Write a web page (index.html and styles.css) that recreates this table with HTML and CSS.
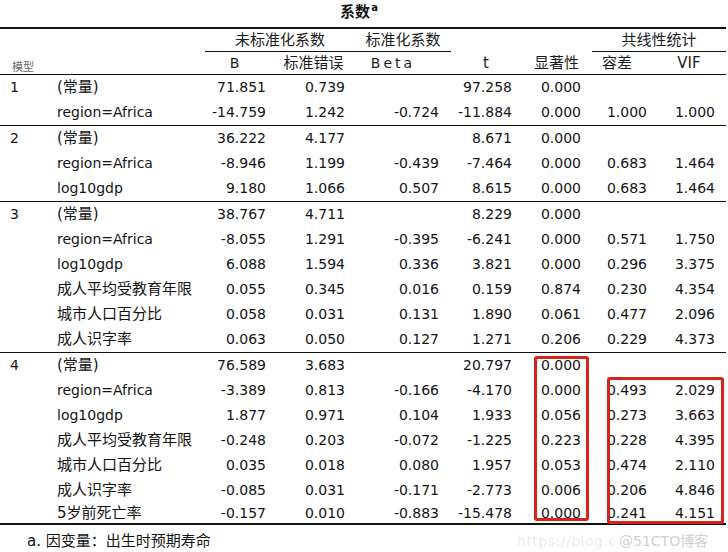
FILE: index.html
```html
<!DOCTYPE html>
<html lang="zh">
<head>
<meta charset="utf-8">
<title>系数</title>
<link rel="stylesheet" href="styles.css">
</head>
<body>
<div class="page">
  <div class="title">系数<sup>a</sup></div>
  <table class="coef">
    <colgroup>
      <col class="c-model"><col class="c-var"><col class="c-b"><col class="c-se"><col class="c-beta"><col class="c-t"><col class="c-sig"><col class="c-tol"><col class="c-vif">
    </colgroup>
    <thead>
      <tr class="h1">
        <th colspan="2"></th>
        <th colspan="2" class="span">未标准化系数</th>
        <th class="span">标准化系数</th>
        <th colspan="2"></th>
        <th colspan="2" class="span">共线性统计</th>
      </tr>
      <tr class="h2">
        <th class="model-h">模型</th>
        <th></th>
        <th class="hb">B</th>
        <th>标准错误</th>
        <th class="beta">Beta</th>
        <th>t</th>
        <th>显著性</th>
        <th class="htol">容差</th>
        <th>VIF</th>
      </tr>
    </thead>
    <tbody>
      <tr class="first"><td>1</td><td class="zh">(常量)</td><td>71.851</td><td>0.739</td><td></td><td>97.258</td><td>0.000</td><td></td><td></td></tr>
      <tr><td></td><td>region=Africa</td><td>-14.759</td><td>1.242</td><td>-0.724</td><td>-11.884</td><td>0.000</td><td>1.000</td><td>1.000</td></tr>

      <tr class="first"><td>2</td><td class="zh">(常量)</td><td>36.222</td><td>4.177</td><td></td><td>8.671</td><td>0.000</td><td></td><td></td></tr>
      <tr><td></td><td>region=Africa</td><td>-8.946</td><td>1.199</td><td>-0.439</td><td>-7.464</td><td>0.000</td><td>0.683</td><td>1.464</td></tr>
      <tr><td></td><td>log10gdp</td><td>9.180</td><td>1.066</td><td>0.507</td><td>8.615</td><td>0.000</td><td>0.683</td><td>1.464</td></tr>

      <tr class="first"><td>3</td><td class="zh">(常量)</td><td>38.767</td><td>4.711</td><td></td><td>8.229</td><td>0.000</td><td></td><td></td></tr>
      <tr><td></td><td>region=Africa</td><td>-8.055</td><td>1.291</td><td>-0.395</td><td>-6.241</td><td>0.000</td><td>0.571</td><td>1.750</td></tr>
      <tr><td></td><td>log10gdp</td><td>6.088</td><td>1.594</td><td>0.336</td><td>3.821</td><td>0.000</td><td>0.296</td><td>3.375</td></tr>
      <tr><td></td><td class="zh">成人平均受教育年限</td><td>0.055</td><td>0.345</td><td>0.016</td><td>0.159</td><td>0.874</td><td>0.230</td><td>4.354</td></tr>
      <tr><td></td><td class="zh">城市人口百分比</td><td>0.058</td><td>0.031</td><td>0.131</td><td>1.890</td><td>0.061</td><td>0.477</td><td>2.096</td></tr>
      <tr><td></td><td class="zh">成人识字率</td><td>0.063</td><td>0.050</td><td>0.127</td><td>1.271</td><td>0.206</td><td>0.229</td><td>4.373</td></tr>

      <tr class="first"><td>4</td><td class="zh">(常量)</td><td>76.589</td><td>3.683</td><td></td><td>20.797</td><td>0.000</td><td></td><td></td></tr>
      <tr><td></td><td>region=Africa</td><td>-3.389</td><td>0.813</td><td>-0.166</td><td>-4.170</td><td>0.000</td><td>0.493</td><td>2.029</td></tr>
      <tr><td></td><td>log10gdp</td><td>1.877</td><td>0.971</td><td>0.104</td><td>1.933</td><td>0.056</td><td>0.273</td><td>3.663</td></tr>
      <tr><td></td><td class="zh">成人平均受教育年限</td><td>-0.248</td><td>0.203</td><td>-0.072</td><td>-1.225</td><td>0.223</td><td>0.228</td><td>4.395</td></tr>
      <tr><td></td><td class="zh">城市人口百分比</td><td>0.035</td><td>0.018</td><td>0.080</td><td>1.957</td><td>0.053</td><td>0.474</td><td>2.110</td></tr>
      <tr><td></td><td class="zh">成人识字率</td><td>-0.085</td><td>0.031</td><td>-0.171</td><td>-2.773</td><td>0.006</td><td>0.206</td><td>4.846</td></tr>
      <tr class="last"><td></td><td class="zh">5岁前死亡率</td><td>-0.157</td><td>0.010</td><td>-0.883</td><td>-15.478</td><td>0.000</td><td>0.241</td><td>4.151</td></tr>
    </tbody>
  </table>
  <div class="note">a. 因变量：出生时预期寿命</div>

  <div class="mark mark-sig"></div>
  <div class="mark mark-col"></div>
  <div class="watermark"><span class="wm-url">https://blog.c</span><span class="wm-brand">@51CTO博客</span></div>
</div>
</body>
</html>
```

FILE: styles.css
```css
html, body {
  margin: 0;
  padding: 0;
  background: #fff;
}

.page {
  position: relative;
  width: 728px;
  height: 552px;
  overflow: hidden;
  font-family: "DejaVu Sans", "Noto Sans CJK SC", sans-serif;
  font-size: 14px;
  color: #141414;
}

.title {
  height: 27px;
  line-height: 24px;
  text-align: center;
  font-weight: bold;
  font-size: 15px;
  padding-right: 10px;
  box-sizing: border-box;
}

.title sup {
  font-size: 10px;
  line-height: 0;
  vertical-align: 6px;
  margin-left: 1px;
}

.coef {
  width: 726px;
  table-layout: fixed;
  border-collapse: separate;
  border-spacing: 0;
  border-top: 2px solid #111;
  border-bottom: 2px solid #111;
}

.c-model { width: 50px; }
.c-var { width: 155px; }
.c-b { width: 67px; }
.c-se { width: 83px; }
.c-beta { width: 96px; }
.c-t { width: 70px; }
.c-sig { width: 71px; }
.c-tol { width: 60px; }
.c-vif { width: 74px; }

.coef th {
  font-weight: normal;
  text-align: center;
  padding: 0;
  font-size: 15px;
  color: #1c1c1c;
  white-space: nowrap;
}

.h1 th {
  height: 22px;
  line-height: 22px;
  vertical-align: middle;
}

.h1 th.span {
  border-bottom: 1px solid #111;
}

.h2 th {
  height: 22px;
  line-height: 22px;
  border-bottom: 1px solid #111;
  vertical-align: middle;
}

.h2 th.model-h {
  text-align: left;
  font-size: 11px;
  color: #6a6a6a;
  padding-left: 12px;
  vertical-align: bottom;
  line-height: 13px;
}

.h2 th.hb { font-size: 14px; padding-right: 8px; }
.h2 th.beta { font-size: 14px; letter-spacing: 3px; padding-right: 20px; }
.h2 th.htol { padding-right: 10px; }

.coef td {
  height: 25px;
  line-height: 25px;
  padding: 0;
  text-align: right;
  white-space: nowrap;
  vertical-align: middle;
}

.coef td:nth-child(1) { text-align: left; padding-left: 10px; }
.coef td:nth-child(2) { text-align: left; padding-left: 7px; }
.coef td:nth-child(3) { padding-right: 6px; }
.coef td:nth-child(4) { padding-right: 10px; }
.coef td:nth-child(5) { padding-right: 12px; }
.coef td:nth-child(6) { padding-right: 9px; }
.coef td:nth-child(7) { padding-right: 11px; }
.coef td:nth-child(8) { padding-right: 5px; }
.coef td:nth-child(9) { padding-right: 11px; }

.coef td.zh { font-size: 15px; }

.coef tbody tr.first:not(:first-child) td {
  border-top: 1px solid #111;
  height: 24px;
}

.coef tbody tr.last td {
  height: 20px;
  line-height: 20px;
  vertical-align: top;
}

.note {
  height: 26px;
  line-height: 32px;
  padding-left: 27px;
  font-size: 15px;
}

.mark {
  position: absolute;
  border: 3px solid #d8231b;
  border-radius: 3px;
  box-sizing: border-box;
}

.mark-sig {
  left: 534px;
  top: 356px;
  width: 55px;
  height: 165px;
}

.mark-col {
  left: 607px;
  top: 377px;
  width: 117px;
  height: 147px;
}

.watermark {
  position: absolute;
  left: 517px;
  top: 531px;
  font-size: 15px;
  line-height: 20px;
  white-space: nowrap;
}

.wm-url {
  display: inline-block;
  width: 102px;
  overflow: hidden;
  vertical-align: top;
  color: #ececec;
  font-size: 14px;
  letter-spacing: 0.5px;
}

.wm-brand {
  color: #d0d0d0;
  font-size: 14px;
}
```
